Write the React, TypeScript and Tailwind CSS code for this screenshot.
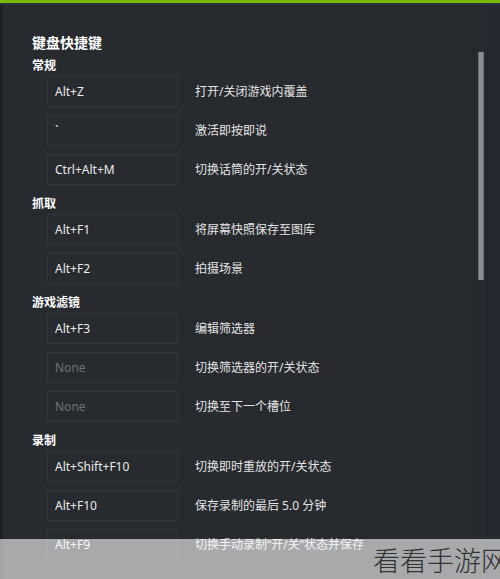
import React from "react";

type Shortcut = { keys: string; label: string; empty?: boolean };
type Section = { title: string; items: Shortcut[] };

const sections: Section[] = [
  {
    title: "常规",
    items: [
      { keys: "Alt+Z", label: "打开/关闭游戏内覆盖" },
      { keys: "`", label: "激活即按即说" },
      { keys: "Ctrl+Alt+M", label: "切换话筒的开/关状态" },
    ],
  },
  {
    title: "抓取",
    items: [
      { keys: "Alt+F1", label: "将屏幕快照保存至图库" },
      { keys: "Alt+F2", label: "拍摄场景" },
    ],
  },
  {
    title: "游戏滤镜",
    items: [
      { keys: "Alt+F3", label: "编辑筛选器" },
      { keys: "None", label: "切换筛选器的开/关状态", empty: true },
      { keys: "None", label: "切换至下一个槽位", empty: true },
    ],
  },
  {
    title: "录制",
    items: [
      { keys: "Alt+Shift+F10", label: "切换即时重放的开/关状态" },
      { keys: "Alt+F10", label: "保存录制的最后 5.0 分钟" },
      { keys: "Alt+F9", label: "切换手动录制“开/关”状态并保存" },
    ],
  },
];

const font = "font-['Noto_Sans','Noto_Sans_CJK_SC',sans-serif]";

function Row({ item }: { item: Shortcut }) {
  return (
    <div className="flex items-center h-[31px] shrink-0">
      <div
        className={`ml-[15px] w-[131px] h-[31px] border border-[#33373c] rounded-[1px] flex items-center pl-[7px] text-[12px] ${
          item.empty ? "text-[#6f7378]" : "text-[#ececec]"
        }`}
      >
        {item.keys}
      </div>
      <div className="ml-[17px] text-[12px] text-[#e4e4e4] whitespace-nowrap">
        {item.label}
      </div>
    </div>
  );
}

export default function App() {
  return (
    <div
      className={`relative w-[500px] h-[579px] overflow-hidden bg-[#272a2e] flex flex-col ${font}`}
    >
      <div className="h-[3px] bg-[#76b900] shrink-0" />
      <div className="h-[2px] bg-[#2d3440] shrink-0" />
      <div className="flex flex-1 min-h-0">
        <div className="w-[3px] bg-[#1d2023] shrink-0" />
        <div className="flex-1 flex flex-col pt-[27px] pl-[29px] min-w-0">
          <div className="h-5 flex items-center text-[14px] font-bold text-white">
            键盘快捷键
          </div>
          <div className="mt-[3px] flex flex-col gap-2">
            {sections.map((s) => (
              <div key={s.title} className="flex flex-col">
                <div className="h-[21px] flex items-center text-[12px] font-bold text-white">
                  {s.title}
                </div>
                <div className="flex flex-col gap-2">
                  {s.items.map((it, i) => (
                    <Row key={s.title + i} item={it} />
                  ))}
                </div>
              </div>
            ))}
          </div>
        </div>
        {/* scrollbar */}
        <div className="w-[14px] shrink-0 pt-[43px] flex mr-[12px]">
          <div className="w-full border-x border-[#202326] flex justify-center">
            <div className="w-[6px] h-[228px] mt-[4px] bg-[#8b8e91] border-x border-[#6c6f72]" />
          </div>
        </div>
        <div className="absolute right-0 top-[5px] bottom-0 w-[12px] bg-[#252a32]" />
      </div>

      {/* watermark band */}
      <div className="absolute left-0 right-0 bottom-0 h-[40px] bg-white/60">
        <span className="absolute left-[373px] top-[1px] text-[27px] font-light text-[#333] whitespace-nowrap font-['Noto_Sans_CJK_SC',sans-serif]">
          看看手游网
        </span>
      </div>
    </div>
  );
}
